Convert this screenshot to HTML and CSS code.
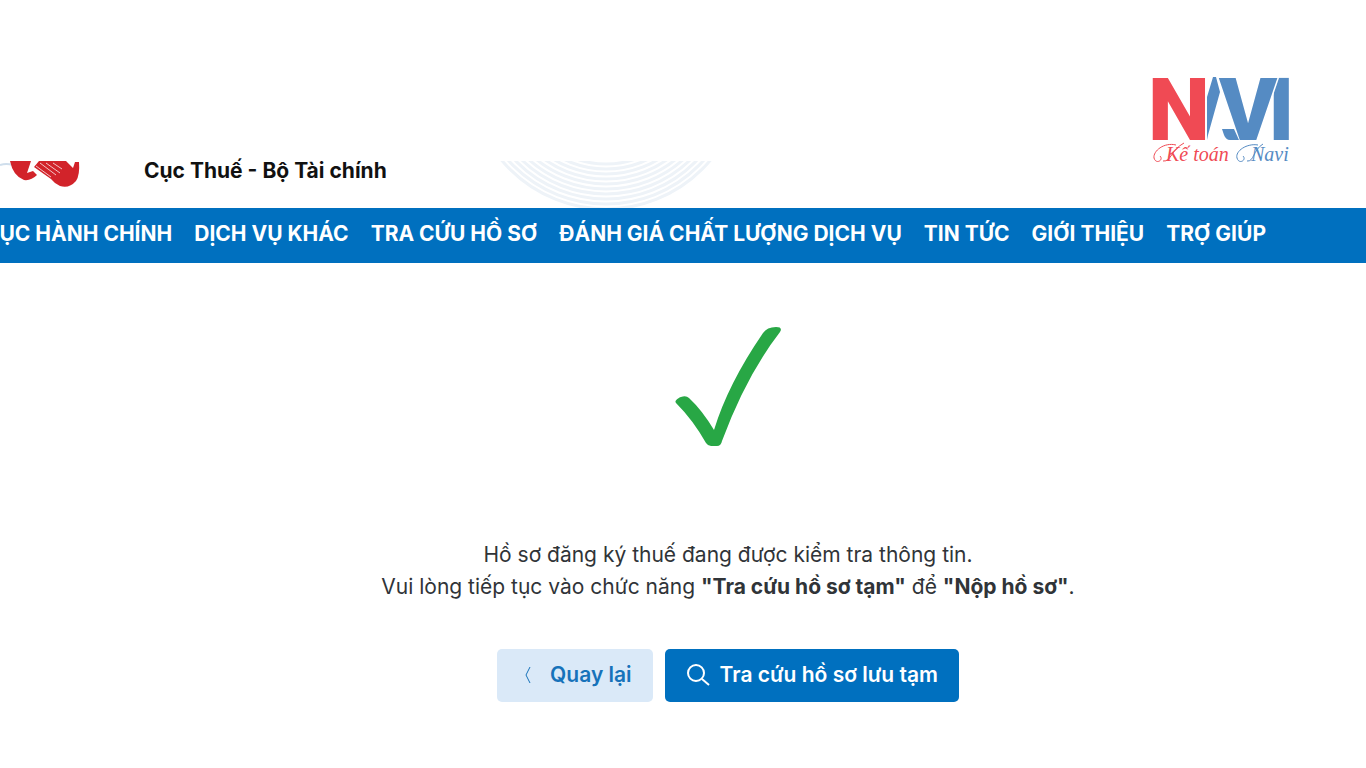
FILE: index.html
```html
<!DOCTYPE html>
<html lang="vi">
<head>
    <meta charset="UTF-8">
    <meta name="viewport" content="width=device-width, initial-scale=1.0">
    <title>Cục Thuế - Bộ Tài chính</title>
    <link rel="stylesheet" href="styles.css">
</head>
<body>
    <div class="brand">
        <svg class="brand-logo" viewBox="0 0 140 92" role="img" aria-label="Kế toán Navi">
            <text class="logo-red logo-big" x="-2" y="66">N</text>
            <text class="logo-blue logo-big" x="118" y="66">I</text>
            <text class="logo-blue logo-big logo-v" x="69" y="66">V</text>
            <path class="mark-blue" d="M57 66V23L63 3H66L70 18L58 61Z"/>
            <path class="mark-blue" d="M72 55H84L89 66H80Q76 66 74 61Z"/>
            <text class="logo-red logo-script" x="16" y="87">Kế toán</text>
            <text class="logo-blue logo-script" x="101" y="87">Navi</text>
            <path class="swash red" d="M26 71C14 68 3 77 4 84C6 91 14 86 10 82M13 87C21 88 21 76 34 69"/>
            <path class="swash blue" d="M108 71C97 69 85 77 87 84C89 91 97 86 93 82M97 87C104 88 103 76 113 70"/>
        </svg>
    </div>

    <header class="banner">
        <svg class="emblem" viewBox="0 0 84 47" aria-hidden="true">
            <path class="emblem-line" d="M0 4Q6 2 13 4"/>
            <path class="emblem-red" d="M10 0H31L27 12L33 10L37 14Q31 20 24 19Q13 15 10 0Z"/>
            <path class="emblem-red" d="M39 0H66L73 7L75 1L79 1Q80 14 76 20Q69 28 60 25Q55 23 51 18L34 6Z"/>
            <path class="emblem-lines" d="M36 5L51 16M40 2L56 14M46 2L60 12M53 2L62 8"/>
        </svg>
        <p class="agency">Cục Thuế - Bộ Tài chính</p>
        <svg class="rings" viewBox="0 0 216 47" aria-hidden="true">
            <g id="rings"></g>
        </svg>
    </header>

    <nav class="menu">
        <a href="#">THỦ TỤC HÀNH CHÍNH</a>
        <a href="#">DỊCH VỤ KHÁC</a>
        <a href="#">TRA CỨU HỒ SƠ</a>
        <a href="#">ĐÁNH GIÁ CHẤT LƯỢNG DỊCH VỤ</a>
        <a href="#">TIN TỨC</a>
        <a href="#">GIỚI THIỆU</a>
        <a href="#">TRỢ GIÚP</a>
    </nav>

    <main class="result">
        <svg class="check" viewBox="0 0 106 121" aria-hidden="true">
            <path d="M1 77C-1 75 3 72 6 71Q11 69 14 72Q27 84 39 104Q53 58 88 7Q92 1 101 1Q108 1 105 6Q71 50 47 115Q46 120 42 120H36Q33 120 31 117Q18 94 1 77Z"/>
        </svg>
        <p class="message">
            Hồ sơ đăng ký thuế đang được kiểm tra thông tin.<br>
            Vui lòng tiếp tục vào chức năng <b>"Tra cứu hồ sơ tạm"</b> để <b>"Nộp hồ sơ"</b>.
        </p>
        <div class="actions">
            <button type="button" class="btn btn-back">
                <svg class="icon-back" viewBox="0 0 16 20" aria-hidden="true"><path d="M12 2L8 10L12 18"/></svg>
                Quay lại
            </button>
            <button type="button" class="btn btn-search">
                <svg class="icon-search" viewBox="0 0 24 24" aria-hidden="true"><circle cx="10" cy="10" r="8"/><path d="M16 16L23 22"/></svg>
                Tra cứu hồ sơ lưu tạm
            </button>
        </div>
    </main>

    <script src="rings.js"></script>
</body>
</html>
```
FILE: styles.css
```css
* {
    box-sizing: border-box;
}

body {
    margin: 0;
    background: #fff;
    color: #303438;
    font-family: Inter, "Noto Sans", sans-serif;
    font-size: 21px;
    line-height: 32px;
    overflow-x: hidden;
}

.brand {
    display: flex;
    justify-content: flex-end;
    height: 161px;
    padding: 74px 76px 0 0;
}

.brand-logo {
    width: 140px;
    height: 92px;
    overflow: visible;
}

.logo-red {
    fill: #f04a54;
}

.logo-blue,
.mark-blue {
    fill: #558bc3;
}

.logo-big {
    font: 900 88px Roboto, sans-serif;
}

.logo-v {
    stroke: #fff;
    stroke-width: 3px;
    paint-order: stroke;
}

.logo-script {
    font: italic 20px "Liberation Serif", serif;
}

.swash {
    fill: none;
    stroke-width: 1;
}

.red {
    stroke: #f04a54;
}

.blue {
    stroke: #558bc3;
}

.banner {
    display: flex;
    height: 47px;
}

.emblem {
    width: 84px;
    height: 47px;
    margin-right: 60px;
}

.emblem-red {
    fill: #d2232a;
}

.emblem-line {
    fill: none;
    stroke: #cfdeec;
    stroke-width: 2;
}

.emblem-lines {
    fill: none;
    stroke: #f3c4c6;
    stroke-width: 1;
}

.agency {
    width: 355px;
    margin: 0;
    color: #111;
    font-weight: 700;
    line-height: 20px;
}

.rings {
    width: 216px;
    height: 47px;
}

.rings circle {
    fill: none;
    stroke: #eef3f8;
    stroke-width: 3;
}

.menu {
    display: flex;
    justify-content: flex-end;
    align-items: center;
    gap: 22px;
    height: 55px;
    padding: 0 100px 3px 0;
    background: #0070bf;
    overflow: hidden;
}

.menu a {
    color: #fff;
    font-weight: 700;
    text-decoration: none;
    white-space: nowrap;
}

.result {
    display: flex;
    flex-direction: column;
    align-items: center;
    padding: 63px 0 64px 90px;
}

.check {
    width: 106px;
    height: 121px;
    fill: #28a745;
}

.message {
    margin: 92px 0 46px;
    text-align: center;
}

.message b {
    font-weight: 700;
}

.actions {
    display: flex;
    gap: 12px;
}

.btn {
    display: flex;
    align-items: center;
    height: 53px;
    padding: 0 21px 2px;
    border: 0;
    border-radius: 5px;
    font: 600 21px Inter, "Noto Sans", sans-serif;
    cursor: pointer;
}

.btn svg {
    fill: none;
    stroke: currentColor;
}

.btn-back {
    gap: 16px;
    background: #dae9f8;
    color: #1672ba;
}

.btn-search {
    gap: 10px;
    background: #0070bf;
    color: #fff;
}

.icon-back {
    width: 16px;
    height: 20px;
    stroke-width: 1;
}

.icon-search {
    width: 24px;
    height: 24px;
    stroke-width: 2;
}
```
FILE: rings.js
```js
// concentric rings behind the banner, the lower part shows
const rings = document.getElementById('rings');
for (let r = 136; r > 87; r -= 5) {
    const circle = document.createElementNS('http://www.w3.org/2000/svg', 'circle');
    circle.setAttribute('cx', 107);
    circle.setAttribute('cy', -88);
    circle.setAttribute('r', r);
    rings.appendChild(circle);
}
```
